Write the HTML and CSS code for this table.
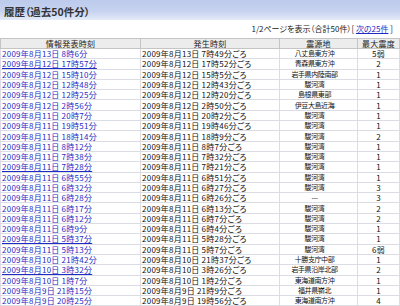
FILE: index.html
```html
<!DOCTYPE html>
<html lang="ja">
<head>
<meta charset="utf-8">
<title>履歴</title>
<link rel="stylesheet" href="styles.css">
</head>
<body>
<h1 class="title">履歴（過去50件分）</h1>
<div class="pager">1/2ページを表示（合計50件）[ <a href="#">次の25件</a> ]</div>
<table class="hist">
<colgroup><col class="c1"><col class="c2"><col class="c3"><col class="c4"></colgroup>
<thead>
<tr><th>情報発表時刻</th><th>発生時刻</th><th>震源地</th><th>最大震度</th></tr>
</thead>
<tbody>
<tr><td><a href="#">2009年8月13日 8時6分</a></td><td>2009年8月13日 7時49分ごろ</td><td class="place">八丈島東方沖</td><td class="ctr">5弱</td></tr>
<tr><td><a href="#">2009年8月12日 17時57分</a></td><td>2009年8月12日 17時52分ごろ</td><td class="place">青森県東方沖</td><td class="ctr">2</td></tr>
<tr><td><a href="#">2009年8月12日 15時10分</a></td><td>2009年8月12日 15時5分ごろ</td><td class="place">岩手県内陸南部</td><td class="ctr">1</td></tr>
<tr><td><a href="#">2009年8月12日 12時48分</a></td><td>2009年8月12日 12時43分ごろ</td><td class="place">駿河湾</td><td class="ctr">1</td></tr>
<tr><td><a href="#">2009年8月12日 12時25分</a></td><td>2009年8月12日 12時20分ごろ</td><td class="place">島根県東部</td><td class="ctr">1</td></tr>
<tr><td><a href="#">2009年8月12日 2時56分</a></td><td>2009年8月12日 2時50分ごろ</td><td class="place">伊豆大島近海</td><td class="ctr">1</td></tr>
<tr><td><a href="#">2009年8月11日 20時7分</a></td><td>2009年8月11日 20時2分ごろ</td><td class="place">駿河湾</td><td class="ctr">1</td></tr>
<tr><td><a href="#">2009年8月11日 19時51分</a></td><td>2009年8月11日 19時46分ごろ</td><td class="place">駿河湾</td><td class="ctr">1</td></tr>
<tr><td><a href="#">2009年8月11日 18時14分</a></td><td>2009年8月11日 18時9分ごろ</td><td class="place">駿河湾</td><td class="ctr">2</td></tr>
<tr><td><a href="#">2009年8月11日 8時12分</a></td><td>2009年8月11日 8時7分ごろ</td><td class="place">駿河湾</td><td class="ctr">1</td></tr>
<tr><td><a href="#">2009年8月11日 7時38分</a></td><td>2009年8月11日 7時32分ごろ</td><td class="place">駿河湾</td><td class="ctr">1</td></tr>
<tr><td><a href="#">2009年8月11日 7時28分</a></td><td>2009年8月11日 7時21分ごろ</td><td class="place">駿河湾</td><td class="ctr">1</td></tr>
<tr><td><a href="#">2009年8月11日 6時55分</a></td><td>2009年8月11日 6時51分ごろ</td><td class="place">駿河湾</td><td class="ctr">1</td></tr>
<tr><td><a href="#">2009年8月11日 6時32分</a></td><td>2009年8月11日 6時27分ごろ</td><td class="place">駿河湾</td><td class="ctr">3</td></tr>
<tr><td><a href="#">2009年8月11日 6時28分</a></td><td>2009年8月11日 6時26分ごろ</td><td class="place">---</td><td class="ctr">3</td></tr>
<tr><td><a href="#">2009年8月11日 6時17分</a></td><td>2009年8月11日 6時13分ごろ</td><td class="place">駿河湾</td><td class="ctr">2</td></tr>
<tr><td><a href="#">2009年8月11日 6時12分</a></td><td>2009年8月11日 6時7分ごろ</td><td class="place">駿河湾</td><td class="ctr">2</td></tr>
<tr><td><a href="#">2009年8月11日 6時9分</a></td><td>2009年8月11日 6時4分ごろ</td><td class="place">駿河湾</td><td class="ctr">1</td></tr>
<tr><td><a href="#">2009年8月11日 5時37分</a></td><td>2009年8月11日 5時28分ごろ</td><td class="place">駿河湾</td><td class="ctr">1</td></tr>
<tr><td><a href="#">2009年8月11日 5時13分</a></td><td>2009年8月11日 5時7分ごろ</td><td class="place">駿河湾</td><td class="ctr">6弱</td></tr>
<tr><td><a href="#">2009年8月10日 21時42分</a></td><td>2009年8月10日 21時37分ごろ</td><td class="place">十勝支庁中部</td><td class="ctr">1</td></tr>
<tr><td><a href="#">2009年8月10日 3時32分</a></td><td>2009年8月10日 3時26分ごろ</td><td class="place">岩手県沿岸北部</td><td class="ctr">2</td></tr>
<tr><td><a href="#">2009年8月10日 1時7分</a></td><td>2009年8月10日 1時2分ごろ</td><td class="place">東海道南方沖</td><td class="ctr">1</td></tr>
<tr><td><a href="#">2009年8月9日 21時15分</a></td><td>2009年8月9日 21時9分ごろ</td><td class="place">福井県嶺北</td><td class="ctr">1</td></tr>
<tr><td><a href="#">2009年8月9日 20時25分</a></td><td>2009年8月9日 19時56分ごろ</td><td class="place">東海道南方沖</td><td class="ctr">4</td></tr>
</tbody>
</table>
</body>
</html>
```
FILE: styles.css
```css
body {
  margin: 0;
  background: #fff;
  color: #111;
  font-family: "Noto Sans CJK JP", "Noto Sans CJK SC", sans-serif;
  font-feature-settings: "palt";
}
.title {
  margin: 0;
  height: 20px;
  padding-left: 4px;
  font-size: 10.5px;
  line-height: 23px;
  font-weight: bold;
  color: #333;
  background: linear-gradient(#bccaec, #c6d2f0 55%, #e4eaf8);
}
.pager {
  height: 18px;
  line-height: 18px;
  padding-right: 7px;
  text-align: right;
  font-size: 8px;
  color: #222;
}
a {
  color: #1f2bc4;
  text-decoration: underline;
}
.hist {
  width: 399px;
  border-collapse: collapse;
  table-layout: fixed;
  font-size: 8px;
  letter-spacing: 0.25px;
}
.c1 { width: 140px; }
.c2 { width: 139px; }
.c3 { width: 78px; }
.c4 { width: 42px; }
.hist th {
  height: 9px;
  padding: 0;
  line-height: 9px;
  font-weight: normal;
  background: #ececec;
  border: 1px solid #c4c4c4;
  color: #222;
}
.hist td {
  height: 9.3px;
  padding: 0 1px;
  line-height: 9px;
  border: 1px solid #dcdce4;
  white-space: nowrap;
  overflow: hidden;
}
.hist td.place {
  padding-right: 9px;
  text-align: center;
  font-size: 7px;
  letter-spacing: -0.4px;
}
.hist td.ctr { text-align: center; }
```
